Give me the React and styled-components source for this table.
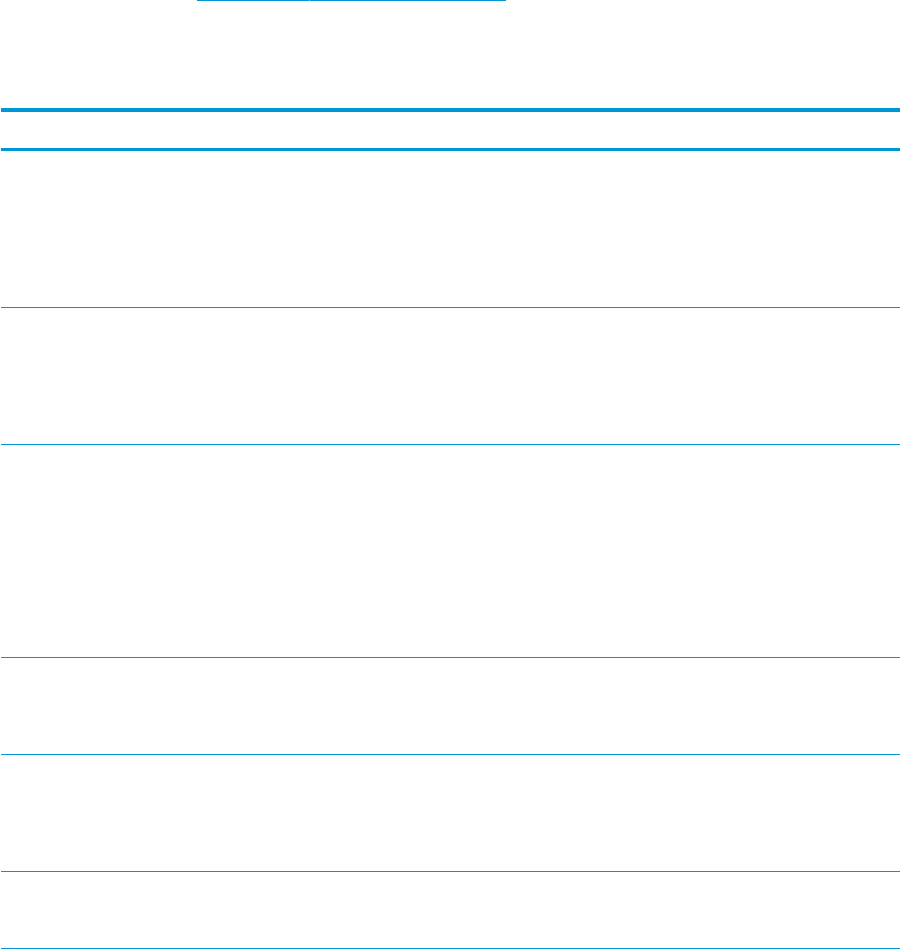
import React from 'react';
import styled, { createGlobalStyle } from 'styled-components';

const GlobalStyle = createGlobalStyle`
  html, body {
    margin: 0;
    padding: 0;
    background: #ffffff;
    font-family: "Liberation Sans", Arial, sans-serif;
  }
`;

const Page = styled.div`
  width: 901px;
  height: 949px;
  overflow: hidden;
  background: #ffffff;
`;

const LinkLine = styled.div`
  display: flex;
  padding-left: 197px;
  height: 108px;
  align-items: flex-start;
`;

const Underline = styled.span`
  display: block;
  width: ${(p) => p.$w}px;
  height: 1px;
  background: ${(p) => (p.$faint ? '#7fc6e8' : '#0096d6')};
`;

const Table = styled.div`
  margin-left: 1px;
  width: 899px;
  border-top: 4px solid #0096d6;
  display: flex;
  flex-direction: column;
`;

const HeaderRow = styled.div`
  height: 36px;
  border-bottom: 3px solid #0096d6;
  display: grid;
  grid-template-columns: 1fr 1fr;
`;

const Row = styled.div`
  height: ${(p) => p.$h}px;
  border-bottom: 1px solid #0096d6;
  display: grid;
  grid-template-columns: 1fr 1fr;
`;

const Cell = styled.div`
  padding: 8px 10px;
  font-size: 14px;
  color: #000;
`;

const rows = [156, 136, 212, 96, 116, 76];

export default function App() {
  return (
    <>
      <GlobalStyle />
      <Page>
        <LinkLine>
          <Underline $w={112} />
          <Underline $w={1} $faint />
          <Underline $w={196} />
        </LinkLine>
        <Table>
          <HeaderRow>
            <Cell />
            <Cell />
          </HeaderRow>
          {rows.map((h, i) => (
            <Row key={i} $h={h}>
              <Cell />
              <Cell />
            </Row>
          ))}
        </Table>
      </Page>
    </>
  );
}
